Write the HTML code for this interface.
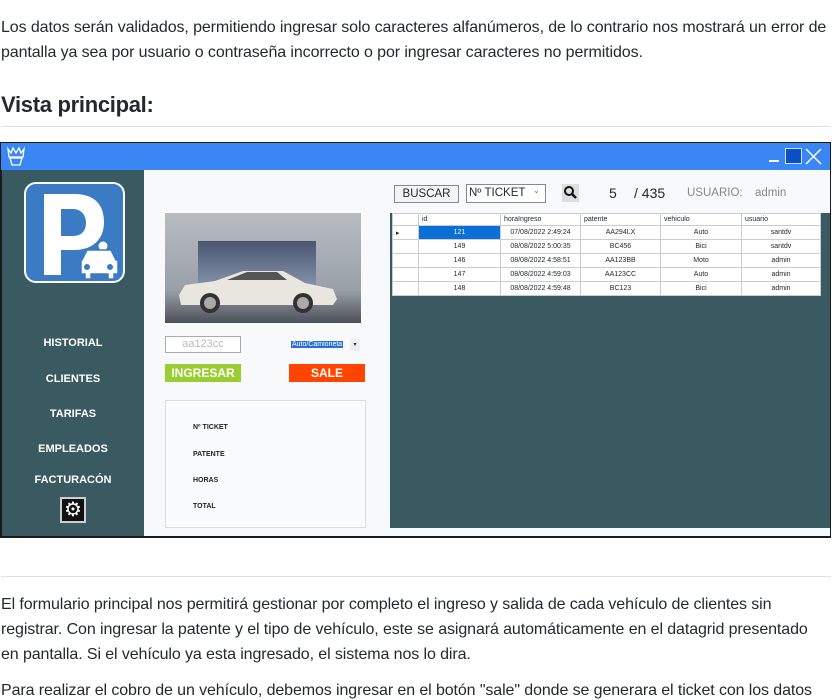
<!DOCTYPE html>
<html><head><meta charset="utf-8"><style>
*{margin:0;padding:0;box-sizing:border-box}
body{width:835px;height:691px;overflow:hidden;background:#fff;font-family:"Liberation Sans",sans-serif;color:#24292e;position:relative}
.t{position:absolute;left:1px;font-size:16px;white-space:nowrap;letter-spacing:-0.1px}
.hr{position:absolute;left:1px;width:830px;height:1px;background:#dfe2e5}
.abs{position:absolute}
.side{color:#fff;font-weight:bold;font-size:11px;text-align:center;width:142px;left:2px}
table{border-collapse:collapse}
td{border:1px solid #ccc;height:14px;font-size:7px;text-align:center;padding:0;background:#fff}
tr.h td{text-align:left;padding-left:3px;height:12px}
.lb{font-size:7px;font-weight:bold;color:#222;left:193px}
</style></head><body>
<div class="t" style="top:19px">Los datos serán validados, permitiendo ingresar solo caracteres alfanúmeros, de lo contrario nos mostrará un error de</div>
<div class="t" style="top:44px">pantalla ya sea por usuario o contraseña incorrecto o por ingresar caracteres no permitidos.</div>
<div class="abs" style="left:1px;top:92px;font-size:22px;font-weight:bold;letter-spacing:-0.3px">Vista principal:</div>
<div class="hr" style="top:126px"></div>

<div class="abs" style="left:0;top:142px;width:831px;height:396px;background:#1b1b1b"></div>
<div class="abs" style="left:1px;top:143px;width:829px;height:27px;background:#3a86f5"></div>
<svg class="abs" style="left:6px;top:146px" width="20" height="20" viewBox="0 0 20 20"><path d="M2 3l3 4 2-5 3 5 3-5 2 5 3-4-1 8H3z M4 12h12l-2 7H6z" fill="none" stroke="#fff" stroke-width="1.3"/></svg>
<div class="abs" style="left:769px;top:160px;width:10px;height:2px;background:#fff"></div>
<div class="abs" style="left:785px;top:148px;width:17px;height:16px;background:#0a4fc6;border:1px solid #cde"></div>
<svg class="abs" style="left:805px;top:148px" width="17" height="17"><path d="M1 1L16 16M16 1L1 16" stroke="#fff" stroke-width="1.5"/></svg>

<div class="abs" style="left:2px;top:170px;width:142px;height:366px;background:#3a5a62"></div>
<div class="abs" style="left:144px;top:170px;width:246px;height:366px;background:#f8f9fb"></div>
<div class="abs" style="left:390px;top:170px;width:440px;height:358px;background:#3a5a62"></div>
<div class="abs" style="left:390px;top:170px;width:440px;height:43px;background:#f8f9fb"></div>
<div class="abs" style="left:390px;top:528px;width:440px;height:8px;background:#f8f9fb"></div>

<div class="abs" style="left:24px;top:182px;width:101px;height:101px;border-radius:12px;background:#3a7bc4;border:2px solid #fff"></div>
<svg class="abs" style="left:24px;top:182px" width="101" height="101" viewBox="0 0 101 101"><path d="M20 12h30c22 0 30 12 30 28s-10 28-30 28H37v25H20zM37 27v27h12c9 0 13-6 13-13s-4-14-13-14z" fill="#fff"/><circle cx="79" cy="64" r="4.5" fill="#fff"/><path d="M58 78l5-10h24l5 10h2v14h-4v5h-6v-5H67v5h-6v-5h-4V78z" fill="#fff" stroke="#3a7bc4" stroke-width="1.5"/><circle cx="63" cy="85" r="3" fill="#3a7bc4"/><circle cx="86" cy="85" r="3" fill="#3a7bc4"/></svg>

<div class="abs side" style="top:337px">HISTORIAL</div>
<div class="abs side" style="top:373px">CLIENTES</div>
<div class="abs side" style="top:408px">TARIFAS</div>
<div class="abs side" style="top:443px">EMPLEADOS</div>
<div class="abs side" style="top:474px">FACTURACÓN</div>
<div class="abs" style="left:60px;top:497px;width:26px;height:26px;background:#111;border:2px solid #ccc;color:#fff;font-size:20px;line-height:22px;text-align:center">⚙</div>

<div class="abs" style="left:165px;top:213px;width:196px;height:110px;background:linear-gradient(#b8bcc2,#9aa0a8 70%,#4b5059)"></div>
<div class="abs" style="left:198px;top:241px;width:118px;height:50px;background:linear-gradient(#4a5670,#8a98b0)"></div>
<svg class="abs" style="left:177px;top:265px" width="160" height="50" viewBox="0 0 160 50"><path d="M2 30l6-10 30-4 28-10h40l22 12 28 6 4 10-4 6H4z" fill="#e8e6df"/><circle cx="33" cy="38" r="10" fill="#333"/><circle cx="126" cy="38" r="10" fill="#333"/><circle cx="33" cy="38" r="6" fill="#aaa"/><circle cx="126" cy="38" r="6" fill="#aaa"/><path d="M50 15l20-8h30l10 8z" fill="#555"/></svg>

<div class="abs" style="left:165px;top:336px;width:76px;height:17px;background:#fff;border:1px solid #aaa;color:#bbb;font-size:11px;text-align:center;line-height:15px">aa123cc</div>
<div class="abs" style="left:291px;top:341px;background:#2b6fd6;color:#fff;font-size:7px;padding:0 1px">Auto/Camioneta</div>
<div class="abs" style="left:350px;top:339px;width:10px;height:12px;background:#eee;font-size:6px;text-align:center;line-height:12px">▾</div>
<div class="abs" style="left:165px;top:364px;width:76px;height:18px;background:#9acd32;color:#fff;font-weight:bold;font-size:12px;text-align:center;line-height:18px">INGRESAR</div>
<div class="abs" style="left:289px;top:364px;width:76px;height:18px;background:#ff4500;color:#fff;font-weight:bold;font-size:12px;text-align:center;line-height:18px">SALE</div>
<div class="abs" style="left:165px;top:400px;width:201px;height:128px;border:1px solid #ddd;background:#fafbfc"></div>
<div class="abs lb" style="top:424px">Nº TICKET</div>
<div class="abs lb" style="top:451px">PATENTE</div>
<div class="abs lb" style="top:477px">HORAS</div>
<div class="abs lb" style="top:503px">TOTAL</div>

<div class="abs" style="left:394px;top:185px;width:65px;height:18px;border:1px solid #888;background:#f4f4f4;font-size:11.5px;text-align:center;line-height:16px">BUSCAR</div>
<div class="abs" style="left:466px;top:184px;width:80px;height:19px;border:1px solid #888;background:#fff;font-size:11.5px;padding-left:2px;line-height:17px">Nº TICKET</div>
<div class="abs" style="left:533px;top:186px;font-size:8px;color:#666">⌄</div>
<div class="abs" style="left:562px;top:184px;width:17px;height:18px;background:#ddd"></div>
<svg class="abs" style="left:563px;top:185px" width="15" height="15"><circle cx="6" cy="6" r="4" fill="none" stroke="#111" stroke-width="2"/><path d="M9 9l4 4" stroke="#111" stroke-width="2.5"/></svg>
<div class="abs" style="left:609px;top:185px;font-size:14px">5</div>
<div class="abs" style="left:634px;top:185px;font-size:14px">/ 435</div>
<div class="abs" style="left:687px;top:187px;font-size:11.5px;color:#888">USUARIO:</div>
<div class="abs" style="left:755px;top:187px;font-size:11.5px;color:#888">admin</div>

<table class="abs" style="left:392px;top:213px;width:429px">
<tr class="h"><td style="width:26px"></td><td style="width:82px">id</td><td style="width:80px">horaIngreso</td><td style="width:80px">patente</td><td style="width:81px">vehiculo</td><td>usuario</td></tr>
<tr><td style="text-align:left;padding-left:3px">▸</td><td style="background:#0a6fd6;color:#fff">121</td><td>07/08/2022 2:49:24</td><td>AA294LX</td><td>Auto</td><td>santdv</td></tr>
<tr><td></td><td>149</td><td>08/08/2022 5:00:35</td><td>BC456</td><td>Bici</td><td>santdv</td></tr>
<tr><td></td><td>146</td><td>08/08/2022 4:58:51</td><td>AA123BB</td><td>Moto</td><td>admin</td></tr>
<tr><td></td><td>147</td><td>08/08/2022 4:59:03</td><td>AA123CC</td><td>Auto</td><td>admin</td></tr>
<tr><td></td><td>148</td><td>08/08/2022 4:59:48</td><td>BC123</td><td>Bici</td><td>admin</td></tr>
</table>

<div class="hr" style="top:576px"></div>
<div class="t" style="top:596px">El formulario principal nos permitirá gestionar por completo el ingreso y salida de cada vehículo de clientes sin</div>
<div class="t" style="top:621px">registrar. Con ingresar la patente y el tipo de vehículo, este se asignará automáticamente en el datagrid presentado</div>
<div class="t" style="top:646px">en pantalla. Si el vehículo ya esta ingresado, el sistema nos lo dira.</div>
<div class="t" style="top:682px">Para realizar el cobro de un vehículo, debemos ingresar en el botón "sale" donde se generara el ticket con los datos</div>
</body></html>
